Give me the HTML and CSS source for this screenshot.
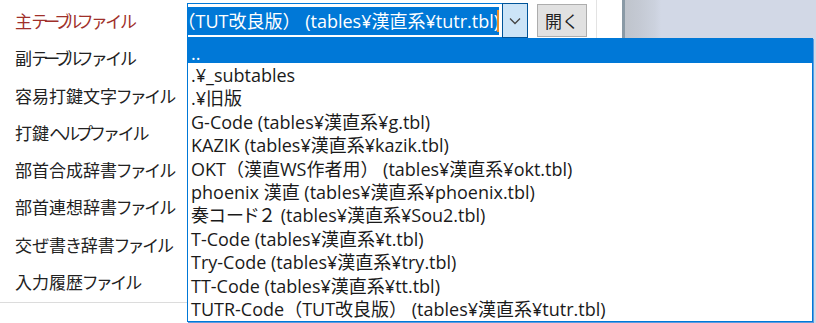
FILE: index.html
```html
<!DOCTYPE html>
<html lang="ja">
<head>
<meta charset="utf-8">
<link rel="stylesheet" href="styles.css">
</head>
<body>
<div class="screen">
  <div class="dialog">
    <div class="labels">
      <div class="label primary">主<span class="tight">テーブル</span>ファイル</div>
      <div class="label">副<span class="tight">テーブル</span>ファイル</div>
      <div class="label">容易打鍵文字ファイル</div>
      <div class="label">打鍵<span class="tight2">ヘルプ</span>ファイル</div>
      <div class="label">部首合成辞書ファイル</div>
      <div class="label">部首連想辞書ファイル</div>
      <div class="label">交ぜ書き辞書ファイル</div>
      <div class="label">入力履歴ファイル</div>
    </div>
    <div class="controls">
      <div class="combo-row">
        <div class="combo">
          <div class="combo-text"><span class="sel">（TUT改良版） (tables¥漢直系¥tutr.tbl)</span><span class="caret"></span></div>
          <div class="combo-btn">
            <svg width="12" height="8" viewBox="0 0 12 8"><path d="M1 1.5 L6 6.5 L11 1.5" fill="none" stroke="#444" stroke-width="1.3"/></svg>
          </div>
        </div>
        <div class="open-btn">開く</div>
      </div>
    </div>
    <div class="bottom-line"></div>
  </div>
  <div class="backdrop">
    <div class="gap"></div>
    <div class="win-edge"></div>
    <div class="win-bg"></div>
  </div>

  <ul class="droplist">
    <li class="item active">..</li>
    <li class="item">.¥_subtables</li>
    <li class="item">.¥旧版</li>
    <li class="item">G-Code (tables¥漢直系¥g.tbl)</li>
    <li class="item">KAZIK (tables¥漢直系¥kazik.tbl)</li>
    <li class="item">OKT（漢直WS作者用） (tables¥漢直系¥okt.tbl)</li>
    <li class="item">phoenix 漢直 (tables¥漢直系¥phoenix.tbl)</li>
    <li class="item"><span class="kana">奏コード</span>２ (tables¥漢直系¥Sou2.tbl)</li>
    <li class="item">T-Code (tables¥漢直系¥t.tbl)</li>
    <li class="item">Try-Code (tables¥漢直系¥try.tbl)</li>
    <li class="item">TT-Code (tables¥漢直系¥tt.tbl)</li>
    <li class="item">TUTR-Code（TUT改良版） (tables¥漢直系¥tutr.tbl)</li>
  </ul>
</div>
</body>
</html>
```

FILE: styles.css
```css
* { box-sizing: border-box; }
html, body { margin: 0; padding: 0; }
body {
  width: 816px;
  height: 323px;
  overflow: hidden;
  background: #fff;
  font-family: "Open Sans", "Noto Sans CJK JP", sans-serif;
  color: #1a1a1a;
}
.screen {
  position: relative;
  display: flex;
  width: 816px;
  height: 323px;
}
.dialog {
  position: relative;
  width: 597px;
  display: flex;
  border-right: 1px solid #e3e3e3;
}
.labels {
  width: 187px;
  padding: 2px 0 0 15px;
  display: flex;
  flex-direction: column;
}
.label {
  height: 37.3px;
  line-height: 37px;
  font-family: "Noto Sans CJK JP", sans-serif;
  font-feature-settings: "palt";
  font-size: 17px;
  color: #222;
  white-space: nowrap;
}
.tight { letter-spacing: -4px; }
.tight2 { letter-spacing: -2.5px; }
.label.primary { color: #a0302a; }
.controls { flex: 1; padding-top: 3px; }
.combo-row { display: flex; align-items: flex-start; gap: 9px; }
.combo {
  display: flex;
  width: 341px;
  height: 35px;
}
.combo-text {
  flex: 1;
  display: flex;
  justify-content: flex-end;
  align-items: center;
  overflow: hidden;
  border: 1px solid #0078d7;
  border-right: none;
  padding: 1px 3px 1px 1px;
  background: #fff;
}
.sel {
  flex: none;
  white-space: nowrap;
  background: #0078d7;
  color: #fff;
  font-size: 18px;
  line-height: 28px;
  height: 28px;
}
.caret {
  flex: none;
  width: 2px;
  height: 22px;
  margin-left: -2px;
  background: #e8902a;
}
.combo-btn {
  width: 26px;
  height: 35px;
  background: #cce4f7;
  border: 1px solid #005499;
  display: flex;
  align-items: center;
  justify-content: center;
}
.open-btn {
  width: 50px;
  height: 33px;
  margin-top: 1px;
  background: #e1e1e1;
  border: 1px solid #adadad;
  display: flex;
  align-items: center;
  justify-content: center;
  font-family: "Noto Sans CJK JP", sans-serif;
  font-size: 17px;
  color: #222;
}
.bottom-line {
  position: absolute;
  left: 0;
  right: 0;
  top: 302px;
  height: 1px;
  background: #dcdcdc;
}
.backdrop {
  flex: 1;
  display: flex;
}
.gap { width: 25px; background: #fff; }
.win-edge { width: 3px; background: #8a9aa6; }
.win-bg {
  flex: 1;
  background: linear-gradient(to right, #bfc4cc 0, #c4c9d3 14px, #ccd2de 30px, #d2d8e6 36px, #d2d8e6 100%);
}
.droplist {
  position: absolute;
  left: 187px;
  top: 38px;
  width: 626px;
  height: 284px;
  margin: 0;
  padding: 0;
  list-style: none;
  background: #fff;
  border: 1px solid #0078d7;
  box-shadow: 1px 1px 0 #5a9be0;
}
.item {
  height: 23.4px;
  line-height: 25px;
  padding-left: 3px;
  font-size: 18px;
  white-space: nowrap;
  color: #1a1a1a;
}
.kana { font-feature-settings: "palt"; }
.item.active {
  height: 24px;
  line-height: 20px;
  padding-top: 4px;
  background: #0078d7;
  color: #fff;
}
```
